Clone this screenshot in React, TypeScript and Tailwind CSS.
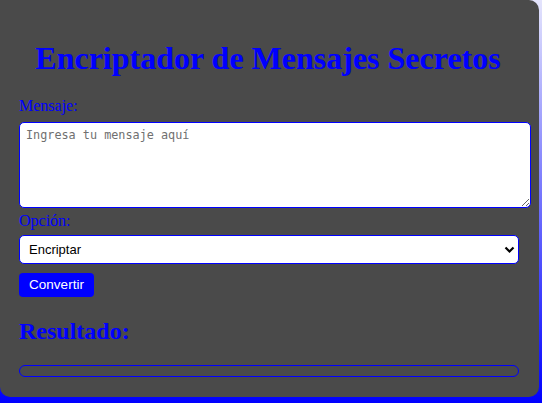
import React from "react";

export default function App() {
  return (
    <div className="w-[542px] h-[403px] overflow-hidden bg-[linear-gradient(to_bottom,#e4e4fc,#0000ff)]">
      <div className="w-[539px] h-[397px] bg-[#4a4a4a] rounded-[10px] rounded-tl-none pl-[19px] pr-[20px] pt-[40px] font-['Liberation_Serif',serif] text-[#0000ff]">
        <h1 className="text-[32px] font-bold text-center leading-[37px] h-[37px] pr-[2px]">
          Encriptador de Mensajes Secretos
        </h1>
        <label className="block mt-[20px] text-[16px] leading-[18px]">Mensaje:</label>
        <textarea
          placeholder="Ingresa tu mensaje aquí"
          className="block mt-[7px] w-[512px] h-[86px] bg-white border border-[#0000ff] rounded-[5px] px-[6px] py-[4px] text-[11.8px] leading-[16px] font-['DejaVu_Sans_Mono',monospace] text-black placeholder:text-[#707070] outline-none"
        />
        <label className="block mt-[4px] text-[16px] leading-[18px]">Opción:</label>
        <div className="relative mt-[5px] w-[500px] h-[29px]">
          <select className="appearance-none w-full h-full bg-white border border-[#0000ff] rounded-[5px] pl-[9px] text-[13px] text-black font-['Liberation_Sans',Arial,sans-serif] outline-none">
            <option>Encriptar</option>
            <option>Desencriptar</option>
          </select>
          <svg className="absolute right-[4px] top-[11px] pointer-events-none" width="11" height="8" viewBox="0 0 11 8">
            <path d="M1.5 1.5 L5.5 5.5 L9.5 1.5" stroke="#000" strokeWidth="2.2" fill="none" />
          </svg>
        </div>
        <button className="block mt-[9px] w-[75px] h-[24px] bg-[#0000ff] text-white rounded-[4px] text-[13.5px] leading-[24px] font-['Liberation_Sans',Arial,sans-serif] text-center">
          Convertir
        </button>
        <h2 className="mt-[20px] text-[24px] font-bold leading-[28px]">Resultado:</h2>
        <div className="mt-[20px] w-[500px] h-[12px] border border-[#0000ff] rounded-[6px]" />
      </div>
    </div>
  );
}
